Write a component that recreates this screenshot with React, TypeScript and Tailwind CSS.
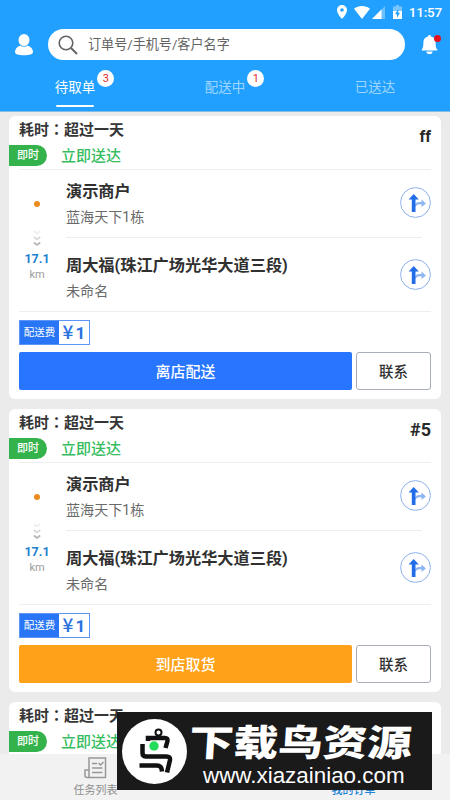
import { useState } from 'react';
import clsx from 'clsx';

const TABS = [
  { name: '待取单', count: 3 },
  { name: '配送中', count: 1 },
  { name: '已送达', count: 0 },
];

const ORDERS = [
  { id: 1, code: 'ff', action: '离店配送', color: 'bg-[#2876ff]' },
  { id: 2, code: '#5', action: '到店取货', color: 'bg-[#ffa21a]' },
  { id: 3, code: '', action: '到店取货', color: 'bg-[#ffa21a]' },
];

function StatusBar() {
  return (
    <div className="flex h-6 items-center justify-end pr-[8px] text-white">
      <svg className="mr-[7px] h-[14px] w-[10px]" viewBox="0 0 10 14" fill="currentColor">
        <path fillRule="evenodd" d="M5 0a5 5 0 0 0-5 5c0 3.700 5 9 5 9s5-5.300 5-9a5 5 0 0 0-5-5Zm0 3.200a1.800 1.800 0 1 1 0 3.600 1.800 1.800 0 0 1 0-3.600Z" />
      </svg>
      <svg className="mr-[2px] h-[13px] w-[16px]" viewBox="0 0 16 13" fill="currentColor">
        <path d="M8 13 0 2.700C2.300.9 5 0 8 0s5.700.9 8 2.700Z" />
      </svg>
      <svg className="mr-2 h-[13px] w-[13px]" viewBox="0 0 13 13" fill="currentColor">
        <path d="M13 0v13H0Z" opacity=".35" />
        <path d="M9.500 3.500V13H0Z" />
      </svg>
      <svg className="mr-[7px] h-[14px] w-[9px]" viewBox="0 0 9 14" fill="currentColor">
        <path d="M3 0h3v1.500h3V6H0V1.500h3Z" opacity=".4" />
        <path d="M0 6h9v8H0Z" />
        <path d="M5.200 4 2 9.200h2v3.600L7 7.800H5.200Z" fill="#21a0ff" />
      </svg>
      <span className="text-[13.5px] font-medium tracking-[-0.2px]">11:57</span>
    </div>
  );
}

function Header() {
  const [active, setActive] = useState(0);

  return (
    <header className="h-[112px] shrink-0 border-b border-[#83bce8] bg-[#21a0ff]">
      <StatusBar />
      <div className="flex h-[41px] items-center">
        <svg className="ml-[15px] h-[22px] w-[18px]" viewBox="0 0 18 22" fill="#fff">
          <path d="M9 0a5.500 5.800 0 0 0-5.500 5.800c0 2.400 1 4.200 2.400 5.400C2 12.600 0 15 0 18c0 2.400 3.500 3.200 9 3.200s9-.8 9-3.200c0-3-2-5.400-5.900-6.800 1.400-1.200 2.400-3 2.400-5.400A5.500 5.800 0 0 0 9 0Z" />
          <path d="M5 10.800c2.400 2.200 5.600 2.200 8 0" fill="none" stroke="#21a0ff" strokeWidth=".8" />
        </svg>
        <div className="ml-[15px] flex h-[31px] w-[357px] items-center rounded-full bg-white">
          <svg className="ml-[10px] h-5 w-5" viewBox="0 0 20 20" fill="none" stroke="#626262" strokeWidth="1.600">
            <circle cx="8" cy="8" r="6.800" />
            <path d="m13 13 6 6" strokeWidth="2" />
          </svg>
          <span className="ml-[10px] pt-px text-[13.1px] text-[#636363]">订单号/手机号/客户名字</span>
        </div>
        <div className="relative ml-[16px]">
          <svg className="h-[20px] w-[17px]" viewBox="0 0 17 20" fill="#fff">
            <path d="M8.500 0c.8 0 1.400.6 1.400 1.400 3.100.7 4.700 3 4.700 5.600 0 4.500.4 6.300 1.700 7.500v1H.7v-1C2 13.300 2.400 11.500 2.400 7c0-2.600 1.600-4.900 4.700-5.600C7.100.6 7.700 0 8.500 0Z" />
            <path d="M5.500 16.400h6a3 2.600 0 0 1-6 0Z" />
          </svg>
          <span className="absolute top-0 left-[13px] h-[7px] w-[7px] rounded-full bg-[#e60f1c]" />
        </div>
      </div>
      <nav className="grid h-[46px] grid-cols-3">
        {TABS.map((tab, i) => (
          <button
            key={tab.name}
            onClick={() => setActive(i)}
            className={clsx('flex flex-col items-center pt-3', i === active ? 'text-white' : 'text-[#9fd6ff]')}
          >
            <span className="relative text-[13.5px] leading-5">
              {tab.name}
              {tab.count > 0 && (
                <span className="absolute -top-[7px] left-[42.500px] flex h-[17px] w-[17px] items-center justify-center rounded-full bg-white text-[11px] text-[#dc2b2b]">
                  {tab.count}
                </span>
              )}
            </span>
            {i === active && <span className="mt-[8px] h-[2px] w-[38px] rounded-full bg-white" />}
          </button>
        ))}
      </nav>
    </header>
  );
}

function RouteIcon() {
  return (
    <svg className="h-[31px] w-[31px] shrink-0" viewBox="0 0 31 31">
      <circle cx="15.500" cy="15.500" r="14.900" fill="#fff" stroke="#8db1ea" />
      <path d="M15 20v-2.500c.8-1.700 2.200-2.500 4.500-2.500h2v-2.500l4.500 4-4.500 3.500v-2.700h-2c-1.700 0-2.600.6-4.500 2.700Z" fill="#8db5f2" />
      <path d="M13.700 7 18.800 12.500h-3.300V25h-3.700V12.500H8.600Z" fill="#236de8" />
    </svg>
  );
}

function Stop({ name, address }: { name: string; address: string }) {
  return (
    <div className="min-w-0 flex-1">
      <p className="text-[16.2px] leading-6 font-bold text-[#303030]">{name}</p>
      <p className="mt-px text-[14.1px] leading-6 text-[#6a6a6a]">{address}</p>
    </div>
  );
}

function OrderCard({ order }: { order: (typeof ORDERS)[number] }) {
  return (
    <article className="mb-[10px] h-[283px] shrink-0 rounded-[6px] bg-white pt-[3px] pr-[10px]">
      <div className="flex h-[50px] justify-between">
        <div>
          <p className="ml-[10px] text-[15px] leading-5 font-bold text-[#363636]">
            耗时<span className="font-['Noto_Sans_CJK_TC',sans-serif]">：</span>超过一天
          </p>
          <div className="mt-[5px] flex items-center">
            <span className="flex h-[21px] w-[38px] items-center rounded-r-full bg-[#34b34c] pt-[2px] pl-[8px] text-[11px] font-medium text-white">即时</span>
            <span className="ml-[14px] pt-px text-[15px] leading-[20px] font-medium text-[#36bd61]">立即送达</span>
          </div>
        </div>
        <span className={clsx('mt-[6px] leading-6 font-bold text-[#292929]', order.code === 'ff' ? 'text-[16px]' : 'text-[18px]')}>
          {order.code}
        </span>
      </div>

      <div className="ml-[10px] flex h-[143px] border-y border-[#eeeeee]">
        <div className="flex w-[36px] shrink-0 flex-col items-center pt-[31px]">
          <span className="h-[6px] w-[6px] rounded-full bg-[#ed8b20]" />
          <svg className="mt-[22px] h-[18px] w-[8px]" viewBox="0 0 8 18" fill="none" strokeWidth="1.700">
            <path d="m.8 2 3.200 2.500L7.200 2" stroke="#eeeeee" />
            <path d="M.8 8 4 10.500 7.200 8" stroke="#d8d8d8" />
            <path d="M.8 13.500 4 16l3.200-2.500" stroke="#b5b5b5" />
          </svg>
          <span className="mt-[4px] text-[12.5px] leading-4 font-bold text-[#1c80d0]">17.1</span>
          <span className="text-[11px] leading-[15px] text-[#9b9b9b]">km</span>
        </div>
        <div className="ml-[11px] flex-1">
          <div className="mr-[9px] h-[68px] border-b border-[#eeeeee] pt-[10px]">
            <div className="-mr-[9px] flex">
              <Stop name="演示商户" address="蓝海天下1栋" />
              <div className="pt-[7px]"><RouteIcon /></div>
            </div>
          </div>
          <div className="flex pt-[16px]">
            <Stop name="周大福(珠江广场光华大道三段)" address="未命名" />
            <div className="pt-[5px]"><RouteIcon /></div>
          </div>
        </div>
      </div>

      <div className="mt-[8px] ml-[10px] flex h-[25px] w-[71px] border border-[#5c95f5]">
        <span className="flex w-[39px] items-center justify-center bg-[#2876f5] pt-px text-[10.5px] text-white">配送费</span>
        <span className="flex flex-1 items-center justify-center text-[17px] leading-6 font-bold text-[#2b71de]">
          <span className="-mt-[3px] w-[13px] font-['Noto_Sans_CJK_SC',sans-serif] text-[19px] leading-[22px] font-medium">¥</span>1
        </span>
      </div>

      <div className="mt-[7px] ml-[10px] flex h-[38px] gap-[4px]">
        <button className={clsx('w-[333px] rounded-[2px] pt-[2px] text-[15px] font-medium text-white', order.color)}>{order.action}</button>
        <button className="flex-1 rounded-[3px] border border-[#a7adb9] bg-white pt-[3px] text-[14.5px] font-medium text-[#303030]">联系</button>
      </div>
    </article>
  );
}

function BottomNav() {
  return (
    <nav className="grid h-[46px] shrink-0 grid-cols-[191px_1fr] bg-[#f2f2f2] text-[11px]">
      <div className="flex flex-col items-center pt-[3px] text-[#8d8d8d]">
        <svg className="h-[22px] w-[23px]" viewBox="0 0 23 22" fill="none" stroke="#989898" strokeWidth="1.500">
          <path d="M5 20.500V1h16.500v19.500H3c-2 0-2-.8-2-2V13h4" />
          <path d="M8 6.500h5M8 11h10.500M8 15.500h10.500M14.500 6l2 2 3-3" />
        </svg>
        <span className="mt-[4px] leading-4">任务列表</span>
      </div>
      <div className="flex items-end justify-center pb-px pl-[66px] text-[#1d83d4]">
        <span className="leading-4 font-medium">我的订单</span>
      </div>
    </nav>
  );
}

function Banner() {
  return (
    <div className="absolute top-[712px] left-[117px] flex h-[78px] w-[315px] items-center bg-[#1a1a1a] text-white">
      <svg className="ml-[5px] h-[65px] w-[65px] shrink-0" viewBox="0 0 65 65">
        <circle cx="32.500" cy="32.500" r="32.500" fill="#fff" />
        <g fill="none" stroke="#111" strokeWidth="4.500">
          <circle cx="36.500" cy="13.500" r="3" strokeWidth="2" />
          <path d="M26 22v-3h17q3 0 2.500 3L43.500 29" />
          <path d="M20.500 25v9q0 3.500 4 3.500h20q4 0 3.500 3.500L45 53.500" />
          <path d="M17.500 46.500h17q4 0 5 3l.5 3" />
        </g>
        <circle cx="32" cy="27" r="4.700" fill="#23dc5a" />
      </svg>
      <div className="ml-[2px] flex-1 pt-[11px]">
        <p className="h-[36px] origin-left -skew-x-3 scale-y-[.82] text-[44.6px] leading-[36px] font-black whitespace-nowrap">下载鸟资源</p>
        <p className="mt-[2px] pl-[14px] font-['Liberation_Sans',sans-serif] text-[22.4px] leading-[23px]">www.xiazainiao.com</p>
      </div>
    </div>
  );
}

export default function App() {
  return (
    <div className="relative flex h-[800px] w-[450px] flex-col overflow-hidden bg-[#ebebeb] font-[Roboto,'Noto_Sans_CJK_SC',sans-serif]">
      <Header />
      <main className="flex min-h-0 flex-1 flex-col overflow-hidden pt-1 pr-[9px] pl-[9px]">
        {ORDERS.map((order) => (
          <OrderCard key={order.id} order={order} />
        ))}
      </main>
      <BottomNav />
      <Banner />
    </div>
  );
}
